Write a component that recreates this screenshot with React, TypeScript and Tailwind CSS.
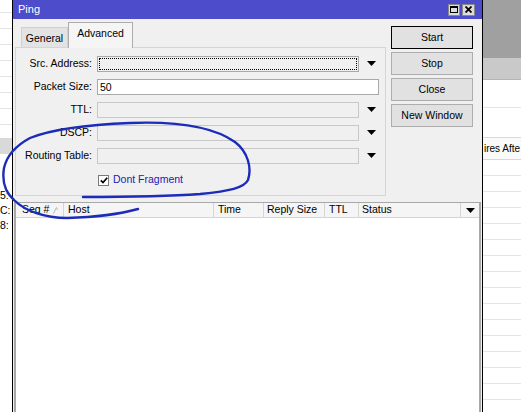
import React from "react";

// ========== Constants ==========

const FIELDS = [
  { label: "Src. Address:", value: "", kind: "focus" },
  { label: "Packet Size:", value: "50", kind: "text" },
  { label: "TTL:", value: "", kind: "disabled" },
  { label: "DSCP:", value: "", kind: "disabled" },
  { label: "Routing Table:", value: "", kind: "disabled" },
];

const COLUMNS = [
  { label: "Seq #", cls: "w-[48px] pl-[6px]", sort: true },
  { label: "Host", cls: "w-[150px] pl-[4px]" },
  { label: "Time", cls: "w-[50px] pl-[4px]" },
  { label: "Reply Size", cls: "w-[61px] pl-[3px]" },
  { label: "TTL", cls: "w-[34px] pl-[4px]" },
  { label: "Status", cls: "w-[102px] pl-[3px]" },
];

const BUTTONS = ["Start", "Stop", "Close", "New Window"];

// ========== Small pieces ==========

function DownArrow() {
  return (
    <svg width="9" height="5" viewBox="0 0 9 5" className="shrink-0">
      <polygon points="0,0 9,0 4.5,5" fill="#000" />
    </svg>
  );
}

function Field({ label, value, kind }: { label: string; value: string; kind: string }) {
  return (
    <div className="h-[23px] flex items-center">
      <div className="w-[76px] text-right whitespace-nowrap">{label}</div>
      {kind === "text" ? (
        <div className="ml-[5px] w-[282px] h-[16px] bg-white border border-[#a9a9a9] pl-[2px] leading-[14px]">
          {value}
        </div>
      ) : (
        <>
          <div
            className={`ml-[5px] w-[262px] h-[16px] border ${
              kind === "focus" ? "border-[#a9a9a9] bg-[#f0f0f0] p-[1px]" : "border-[#c8c8c8] bg-[#f0f0f0]"
            }`}
          >
            {kind === "focus" && <div className="w-full h-full border border-dotted border-black" />}
          </div>
          <div className="ml-[8px]">
            <DownArrow />
          </div>
        </>
      )}
    </div>
  );
}

// ========== Main Component ==========

export default function App() {
  return (
    <div className="relative w-[521px] h-[412px] overflow-hidden bg-white text-[10.5px] text-black font-['Liberation_Sans',Arial,sans-serif]">
      {/* windows behind the ping window */}
      <div className="flex h-full">
        <div className="w-[12px] flex flex-col overflow-hidden">
          <div className="h-[13px] shrink-0 border-b border-[#e4e4e4]" />
          {Array.from({ length: 7 }).map((_, i) => (
            <div key={i} className="h-[16px] shrink-0 border-b border-[#e4e4e4]" />
          ))}
          <div className="h-[13px] shrink-0" />
          <div className="h-[16px] shrink-0 bg-[#d9d9d9]" />
          <div className="h-[34px] shrink-0" />
          {["5:", "C:", "8:"].map((t) => (
            <div key={t} className="h-[15px] shrink-0 leading-[15px] whitespace-nowrap">
              {t}
            </div>
          ))}
        </div>
        <div className="flex-1" />
        <div className="w-[38px] flex flex-col overflow-hidden">
          <div className="h-[58px] shrink-0 bg-[#a0a0a0]" />
          <div className="h-[22px] shrink-0 bg-[#c9c9c9] border-b border-[#b5b5b5]" />
          <div className="h-[28px] shrink-0 border-b border-[#e4e4e4]" />
          <div className="h-[29px] shrink-0" />
          <div className="h-[23px] shrink-0 border-y border-[#d9d9d9] bg-[#fafafa] flex items-center whitespace-nowrap text-[10px]">
            <span className="ml-[1px]">ires Afte</span>
          </div>
          {Array.from({ length: 16 }).map((_, i) => (
            <div key={i} className="h-[16px] shrink-0 border-b border-[#e4e4e4]" />
          ))}
        </div>
      </div>

      {/* Ping window */}
      <div className="absolute left-[12px] top-0 w-[471px] h-[440px] bg-[#f0f0f0] border-x border-black flex flex-col">
        <div className="h-[19px] shrink-0 bg-[#4d4dcb] flex items-center pl-[5px] pr-[7px] text-white">
          <span className="text-[11px]">Ping</span>
          <div className="ml-auto flex gap-[2px]">
            <div className="w-[12px] h-[12px] bg-[#dcdcdc] border border-[#8a8a8a] flex items-center justify-center">
              <div className="w-[8px] h-[7px] border border-black border-t-2" />
            </div>
            <div className="w-[13px] h-[12px] bg-[#dcdcdc] border border-[#8a8a8a] flex items-center justify-center">
              <svg width="7" height="7" viewBox="0 0 7 7">
                <path d="M0.5 0.5 L6.5 6.5 M6.5 0.5 L0.5 6.5" stroke="#000" strokeWidth="1.8" />
              </svg>
            </div>
          </div>
        </div>

        <div className="flex pt-[3px] shrink-0">
          {/* tab control */}
          <div className="ml-[2px] w-[371px] flex flex-col">
            <div className="h-[25px] flex items-end pl-[6px]">
              <div className="h-[20px] w-[47px] bg-[#e3e3e3] border border-b-0 border-[#d0d0d0] flex items-center justify-center pt-[2px]">
                General
              </div>
              <div className="relative z-10 -mb-px h-[26px] w-[65px] bg-[#f5f5f5] border border-b-0 border-[#adadad] flex items-center justify-center pb-[4px]">
                Advanced
              </div>
            </div>
            <div className="h-[149px] border border-[#d5d5d5] bg-[#f0f0f0] pt-[4px]">
              {FIELDS.map((f) => (
                <Field key={f.label} {...f} />
              ))}
              <div className="h-[23px] flex items-center pt-[3px]">
                <div className="ml-[82px] w-[11px] h-[11px] bg-white border border-[#7a7a7a] flex items-center justify-center">
                  <svg width="8" height="7" viewBox="0 0 8 7">
                    <path d="M0.8 3.4 L3 5.6 L7.2 0.8" fill="none" stroke="#000" strokeWidth="1.7" />
                  </svg>
                </div>
                <span className="ml-[4px] text-[#2020b8]">Dont Fragment</span>
              </div>
            </div>
          </div>

          {/* buttons */}
          <div className="ml-[5px] w-[82px] mt-[4px] flex flex-col gap-[3px]">
            {BUTTONS.map((b, i) => (
              <div
                key={b}
                className={`h-[23px] flex items-center justify-center bg-[#e1e1e1] border ${
                  i === 0 ? "border-black" : "border-[#adadad]"
                }`}
              >
                {b}
              </div>
            ))}
          </div>
        </div>

        {/* results table */}
        <div className="mt-[6px] mx-[1px] flex-1 border-t border-x-2 border-[#a8a8a8] bg-white flex flex-col">
          <div className="h-[15px] shrink-0 flex bg-[#f5f5f5] border-b border-[#d5d5d5]">
            {COLUMNS.map((c) => (
              <div
                key={c.label}
                className={`${c.cls} shrink-0 border-r border-[#d5d5d5] flex items-center whitespace-nowrap`}
              >
                {c.label}
                {c.sort && (
                  <svg width="5" height="7" viewBox="0 0 5 7" className="ml-[4px]">
                    <path d="M0.5 6.5 L3.5 0.5 L4.5 3" fill="none" stroke="#b8b8b8" strokeWidth="1" />
                  </svg>
                )}
              </div>
            ))}
            <div className="flex-1 flex items-center justify-center">
              <DownArrow />
            </div>
          </div>
        </div>
      </div>

      {/* hand drawn annotation */}
      <svg width="521" height="412" viewBox="0 0 521 412" className="absolute inset-0 pointer-events-none">
        <path
          d="M138 209 C120 214 100 217 67 218 C45 218 25 211 14 200 C5 192 2 180 4 168 C7 155 17 145 30 138 C50 130 80 125 130 123 C180 121 215 128 235 142 C248 152 252 168 248 180 C244 188 230 191 200 194 C160 197 120 197 83 197"
          fill="none"
          stroke="#1c2cb8"
          strokeWidth="2.4"
          strokeLinecap="round"
        />
      </svg>
    </div>
  );
}
